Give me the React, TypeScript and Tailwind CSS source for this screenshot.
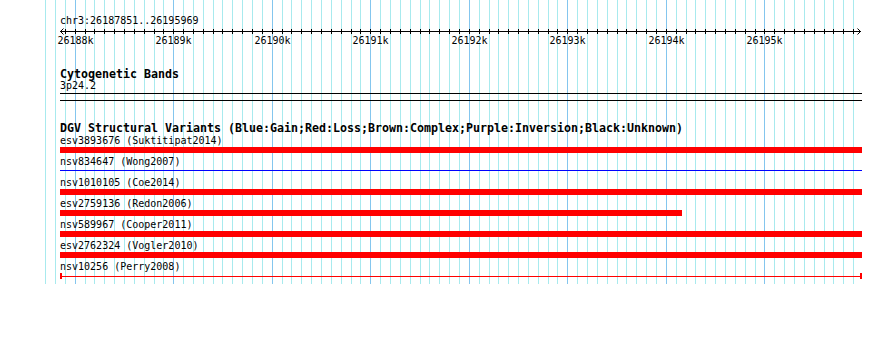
import React from 'react';

// genome coords -> pixel x
const START = 26187851;
const END = 26195969;
const SCALE = 800 / (END - START + 1);
const toX = (pos: number) => 60 + (pos - START) * SCALE;

interface Feature {
  id: string;
  label: string;
  kind: 'bar' | 'line' | 'capped';
  color: string;
  start: number;
  end: number;
}

const features: Feature[] = [
  { id: 'esv3893676', label: 'esv3893676 (Suktitipat2014)', kind: 'bar', color: '#ff0000', start: START, end: END + 20 },
  { id: 'nsv834647', label: 'nsv834647 (Wong2007)', kind: 'line', color: '#0000ff', start: START, end: END + 20 },
  { id: 'nsv1010105', label: 'nsv1010105 (Coe2014)', kind: 'bar', color: '#ff0000', start: START, end: END + 20 },
  { id: 'esv2759136', label: 'esv2759136 (Redon2006)', kind: 'bar', color: '#ff0000', start: START, end: 26194167 },
  { id: 'nsv589967', label: 'nsv589967 (Cooper2011)', kind: 'bar', color: '#ff0000', start: START, end: END + 20 },
  { id: 'esv2762324', label: 'esv2762324 (Vogler2010)', kind: 'bar', color: '#ff0000', start: START, end: END + 20 },
  { id: 'nsv10256', label: 'nsv10256 (Perry2008)', kind: 'capped', color: '#ff0000', start: START, end: END + 20 },
];

const gridPositions: number[] = [];
for (let p = 26187700; p <= 26195900; p += 100) gridPositions.push(p);

const GridLines: React.FC = () => (
  <svg className="absolute left-0 top-0" width={890} height={284} shapeRendering="crispEdges">
    {gridPositions.map((p) => {
      const x = Math.round(toX(p)) + 0.5;
      const major = p % 1000 === 0;
      return <line key={p} x1={x} x2={x} y1={0} y2={284} stroke={major ? '#84c6ee' : '#a8eaee'} strokeWidth={1} />;
    })}
  </svg>
);

const Ruler: React.FC = () => {
  const ticks = gridPositions.filter((p) => p >= 26187900);
  const endX = 861;
  return (
    <svg className="block" width={890} height={22} shapeRendering="crispEdges">
      <line x1={60} x2={endX} y1={4.5} y2={4.5} stroke="#000" />
      {/* arrow heads */}
      <polyline points="63.5,1.5 60.5,4.5 63.5,7.5" fill="none" stroke="#000" shapeRendering="auto" />
      <polyline points={`${endX - 3.5},1.5 ${endX - 0.5},4.5 ${endX - 3.5},7.5`} fill="none" stroke="#000" shapeRendering="auto" />
      {ticks.map((p) => {
        const x = Math.round(toX(p)) + 0.5;
        return <line key={p} x1={x} x2={x} y1={2} y2={7} stroke="#000" />;
      })}
      {ticks
        .filter((p) => p % 1000 === 0)
        .map((p) => (
          <text
            key={`l${p}`}
            x={Math.round(toX(p)) + 0.5}
            y={17}
            textAnchor="middle"
            fontFamily="'DejaVu Sans Mono', monospace"
            fontSize={10}
            fill="#000"
          >
            {p / 1000}k
          </text>
        ))}
    </svg>
  );
};

const FeatureRow: React.FC<{ feature: Feature }> = ({ feature }) => {
  const left = toX(feature.start) - 60;
  const width = Math.min(toX(feature.end), 862) - toX(feature.start);
  return (
    <div className="flex flex-col">
      <div className="h-[13px] pl-[60px] whitespace-pre">{feature.label}</div>
      <div className="relative h-[8px] pl-[60px]">
        {feature.kind === 'bar' && (
          <div className="h-[6px]" style={{ marginLeft: left, width, backgroundColor: feature.color }} />
        )}
        {feature.kind === 'line' && (
          <div className="mt-[2px] h-[1px]" style={{ marginLeft: left, width, backgroundColor: feature.color }} />
        )}
        {feature.kind === 'capped' && (
          <div className="flex h-[6px] items-center" style={{ marginLeft: left, width }}>
            <div className="h-[6px] w-[2px] bg-[#ff0000]" />
            <div className="h-[1px] flex-1 bg-[#ff0000]" />
            <div className="h-[6px] w-[2px] bg-[#ff0000]" />
          </div>
        )}
      </div>
    </div>
  );
};

export default function App() {
  return (
    <div className="relative h-[345px] w-[890px] overflow-hidden bg-white font-['DejaVu_Sans_Mono',monospace] text-[10px] leading-[13px] text-black">
      <GridLines />
      <div className="relative flex flex-col pt-[14px]">
        <div className="h-[13px] pl-[60px]">chr3:26187851..26195969</div>
        <Ruler />

        {/* cytogenetic bands */}
        <div className="mt-[20px] h-[11px] pl-[60px] text-[11.63px] font-bold leading-[11px] whitespace-pre">Cytogenetic Bands</div>
        <div className="h-[12px] pl-[60px] leading-[12px]">3p24.2</div>
        <div className="ml-[60px] mt-[1px] h-[8px] w-[802px] border-y border-black" />

        {/* DGV */}
        <div className="mt-[22px] h-[11px] pl-[60px] text-[11.63px] font-bold leading-[11px] whitespace-pre">
          DGV Structural Variants (Blue:Gain;Red:Loss;Brown:Complex;Purple:Inversion;Black:Unknown)
        </div>
        {features.map((f) => (
          <FeatureRow key={f.id} feature={f} />
        ))}
      </div>
    </div>
  );
}
